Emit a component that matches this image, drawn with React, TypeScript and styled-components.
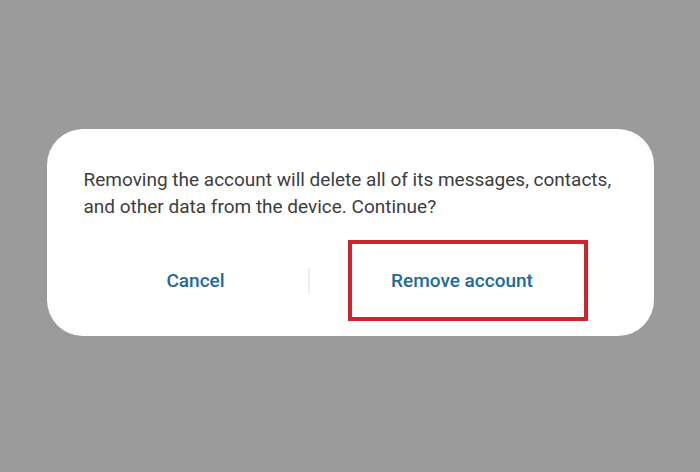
import styled, { createGlobalStyle } from 'styled-components'

const GlobalStyle = createGlobalStyle`
  html, body {
    margin: 0;
    padding: 0;
    background: #9b9b9b;
  }
  body {
    font-family: Roboto, 'Liberation Sans', sans-serif;
  }
`

const Screen = styled.div`
  width: 700px;
  height: 472px;
  background: #9b9b9b;
  display: flex;
  justify-content: center;
  align-items: flex-start;
  padding-top: 129px;
  box-sizing: border-box;
`

const Dialog = styled.div`
  width: 607px;
  height: 207px;
  background: #ffffff;
  border-radius: 36px;
  box-sizing: border-box;
  padding: 37px 37px 15px;
  display: flex;
  flex-direction: column;
`

const Message = styled.p`
  margin: 0;
  font-size: 19px;
  line-height: 27px;
  color: #3d3d3d;
`

const Actions = styled.div`
  margin-top: 20px;
  height: 81px;
  display: grid;
  grid-template-columns: 224px 2px 1fr;
  align-items: center;
`

const Divider = styled.div`
  width: 2px;
  height: 25px;
  background: #ececec;
`

const ActionCell = styled.div<{ $shift?: number }>`
  display: flex;
  justify-content: center;
  padding-left: ${(p) => p.$shift ?? 0}px;
`

const ActionButton = styled.button<{ $highlight?: boolean }>`
  border: ${(p) => (p.$highlight ? '4px solid #d2232d' : 'none')};
  background: transparent;
  font-family: Roboto, 'Liberation Sans', sans-serif;
  font-size: 19px;
  font-weight: 500;
  color: #1c6b98;
  cursor: pointer;
  box-sizing: border-box;
  width: ${(p) => (p.$highlight ? '240px' : 'auto')};
  height: ${(p) => (p.$highlight ? '81px' : 'auto')};
  padding: ${(p) => (p.$highlight ? '0 11px 0 0' : '0')};
`

export default function App() {
  return (
    <>
      <GlobalStyle />
      <Screen>
        <Dialog>
          <Message>
            Removing the account will delete all of its messages, contacts,
            <br />
            and other data from the device. Continue?
          </Message>
          <Actions>
            <ActionCell>
              <ActionButton>Cancel</ActionButton>
            </ActionCell>
            <Divider />
            <ActionCell $shift={9}>
              <ActionButton $highlight>Remove account</ActionButton>
            </ActionCell>
          </Actions>
        </Dialog>
      </Screen>
    </>
  )
}
